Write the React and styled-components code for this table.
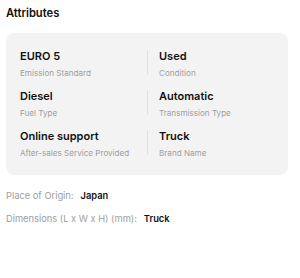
import React from "react";
import styled, { createGlobalStyle } from "styled-components";

const Global = createGlobalStyle`
  html, body { margin: 0; padding: 0; background: #fff; }
  body { font-family: Inter, "Noto Sans", sans-serif; color: #111; }
`;

const Page = styled.div`
  width: 300px;
  padding: 6px 12px 0 6px;
  box-sizing: border-box;
`;

const Title = styled.h2`
  margin: 0;
  font-size: 11.2px;
  line-height: 14px;
  font-weight: 600;
  color: #111;
`;

const Card = styled.div`
  margin-top: 13px;
  background: #f3f3f3;
  border-radius: 8px;
  padding: 16px 14px 17px;
  display: grid;
  grid-template-columns: 1fr 1fr;
  row-gap: 11px;
`;

const Cell = styled.div`
  position: relative;
  display: flex;
  flex-direction: column;
  gap: 5px;
  padding-left: ${(p) => (p.$divided ? "12px" : "0")};
  &::before {
    content: "";
    display: ${(p) => (p.$divided ? "block" : "none")};
    position: absolute;
    left: 0;
    top: 1px;
    bottom: 3px;
    width: 1px;
    background: #e2e2e2;
  }
`;

const Value = styled.div`
  font-size: 11px;
  line-height: 14px;
  font-weight: 600;
  color: #111;
`;

const Label = styled.div`
  font-size: 8.1px;
  line-height: 10px;
  color: #9e9e9e;
`;

const Details = styled.div`
  margin-top: 15px;
  display: flex;
  flex-direction: column;
  gap: 11px;
`;

const Line = styled.div`
  display: flex;
  gap: 7px;
  font-size: 9.3px;
  line-height: 12px;
`;

const Key = styled.span`
  color: #9e9e9e;
`;

const Val = styled.span`
  color: #111;
  font-weight: 600;
`;

const attrs = [
  ["EURO 5", "Emission Standard"],
  ["Used", "Condition"],
  ["Diesel", "Fuel Type"],
  ["Automatic", "Transmission Type"],
  ["Online support", "After-sales Service Provided"],
  ["Truck", "Brand Name"],
];

export default function App() {
  return (
    <Page>
      <Global />
      <Title>Attributes</Title>
      <Card>
        {attrs.map(([v, l], i) => (
          <Cell key={i} $divided={i % 2 === 1}>
            <Value>{v}</Value>
            <Label>{l}</Label>
          </Cell>
        ))}
      </Card>
      <Details>
        <Line>
          <Key>Place of Origin:</Key>
          <Val>Japan</Val>
        </Line>
        <Line>
          <Key>Dimensions (L x W x H) (mm):</Key>
          <Val>Truck</Val>
        </Line>
      </Details>
    </Page>
  );
}
